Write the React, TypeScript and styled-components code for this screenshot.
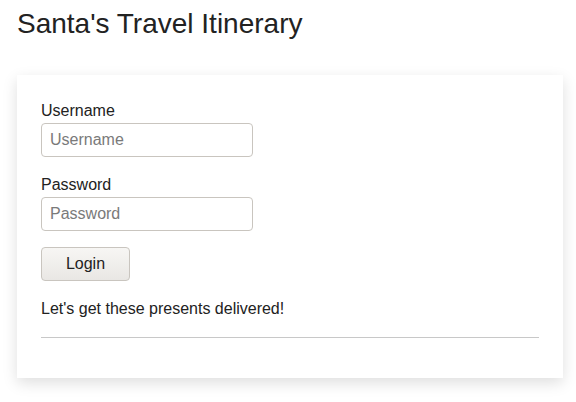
import React from "react";
import styled, { createGlobalStyle } from "styled-components";

const Global = createGlobalStyle`
  html, body { margin: 0; padding: 0; background: #fff; }
  body { font-family: "Liberation Sans", Arial, sans-serif; color: #222; }
`;

const Page = styled.div`
  padding: 8px 13px 24px 17px;
`;

const Title = styled.h1`
  margin: 0;
  font-size: 28px;
  font-weight: 400;
  line-height: 32px;
  color: #222;
`;

const Card = styled.div`
  margin-top: 35px;
  background: #fff;
  box-shadow: 0 5px 14px rgba(0, 0, 0, 0.13);
  padding: 27px 24px 40px;
`;

const Form = styled.form`
  display: flex;
  flex-direction: column;
  align-items: flex-start;
`;

const Label = styled.label<{ $first?: boolean }>`
  display: block;
  font-size: 16px;
  line-height: 18px;
  margin-top: ${(p) => (p.$first ? "0" : "19px")};
  margin-bottom: 3px;
  color: #222;
`;

const Input = styled.input`
  box-sizing: border-box;
  width: 212px;
  height: 34px;
  padding: 7px 8px;
  font-family: "Liberation Sans", Arial, sans-serif;
  font-size: 16px;
  color: #222;
  border: 1px solid #c9c5bf;
  border-radius: 4px;
  background: #fff;
  outline: none;
  &::placeholder { color: #7a7a7a; }
`;

const Button = styled.button`
  box-sizing: border-box;
  margin-top: 16px;
  width: 89px;
  height: 34px;
  padding: 0;
  font-family: "Liberation Sans", Arial, sans-serif;
  font-size: 16px;
  color: #222;
  border: 1px solid #c9c5bf;
  border-radius: 4px;
  background: linear-gradient(#f7f6f4, #e9e7e4);
`;

const Message = styled.p`
  margin: 19px 0 0;
  font-size: 16px;
  line-height: 18px;
  color: #222;
`;

const Rule = styled.hr`
  margin: 19px 0 0;
  border: 0;
  border-top: 1px solid #c8c8c8;
  height: 0;
`;

export default function App() {
  return (
    <Page>
      <Global />
      <Title>Santa's Travel Itinerary</Title>
      <Card>
        <Form onSubmit={(e) => e.preventDefault()}>
          <Label $first htmlFor="u">Username</Label>
          <Input id="u" placeholder="Username" />
          <Label htmlFor="p">Password</Label>
          <Input id="p" type="password" placeholder="Password" />
          <Button type="submit">Login</Button>
        </Form>
        <Message>Let's get these presents delivered!</Message>
        <Rule />
      </Card>
    </Page>
  );
}
